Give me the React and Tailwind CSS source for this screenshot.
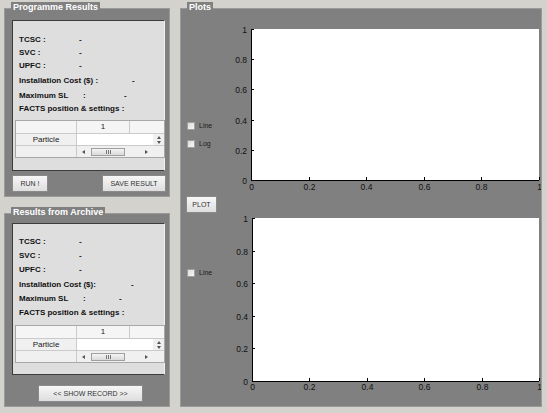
import React from "react";

const FONT = "font-['Liberation_Sans',Arial,sans-serif]";

function Panel({ title, className, children }) {
  return (
    <div className={"relative bg-[#808080] border border-[#9a9a9a] " + className}>
      <div className="absolute left-[6px] top-[-7px] bg-[#808080] px-[2px] text-[9px] leading-[10px] font-bold text-white">
        {title}
      </div>
      {children}
    </div>
  );
}

function Btn({ children, className }) {
  return (
    <button
      className={
        "h-[17px] border border-[#8a8a8a] bg-linear-to-b from-[#f7f7f7] to-[#dedede] text-[7px] leading-none text-[#333] " +
        className
      }
    >
      {children}
    </button>
  );
}

function Checkbox({ label, className }) {
  return (
    <div className={"flex items-center h-[8px] gap-[4px] " + className}>
      <span className="w-[8px] h-[8px] border border-[#a0a0a0] bg-linear-to-br from-[#dcdcdc] to-[#f8f8f8]" />
      <span className="text-[7px] leading-[8px] text-[#1c1c1c]">{label}</span>
    </div>
  );
}

/* ---------- table ---------- */
function Arrow({ dir }) {
  const pts = {
    left: "3,0 3,4 0,2",
    right: "0,0 0,4 3,2",
    up: "0,3 4,3 2,0",
    down: "0,0 4,0 2,3",
  }[dir];
  const w = dir === "left" || dir === "right" ? 3 : 4;
  const h = dir === "left" || dir === "right" ? 4 : 3;
  return (
    <svg width={w} height={h} className="block">
      <polygon points={pts} fill="#555" />
    </svg>
  );
}

function FactsTable() {
  return (
    <div className="ml-[2px] w-[150px] border border-[#a8a8a8] bg-[#f0f0f0] text-[8px] text-[#222]">
      <div className="flex h-[13px] border-b border-[#cacaca] bg-[#f5f5f5]">
        <div className="w-[61px] border-r border-[#cacaca]" />
        <div className="w-[53px] border-r border-[#cacaca] flex items-center justify-center">1</div>
        <div className="flex-1" />
      </div>
      <div className="flex h-[12px] border-b border-[#cacaca]">
        <div className="w-[61px] border-r border-[#cacaca] flex items-center justify-center">Particle</div>
        <div className="w-[76px] bg-white" />
        <div className="flex-1 flex flex-col items-center justify-center gap-[2px]">
          <Arrow dir="up" />
          <Arrow dir="down" />
        </div>
      </div>
      <div className="flex h-[11px]">
        <div className="w-[61px] border-r border-[#cacaca]" />
        <div className="w-[76px] flex items-center pl-[5px]">
          <Arrow dir="left" />
          <div className="ml-[6px] w-[34px] h-[8px] border border-[#a0a0a0] bg-linear-to-b from-[#f4f4f4] to-[#dadada] flex items-center justify-center gap-[1px]">
            <span className="w-px h-[4px] bg-[#777]" />
            <span className="w-px h-[4px] bg-[#777]" />
            <span className="w-px h-[4px] bg-[#777]" />
          </div>
          <div className="ml-[20px]">
            <Arrow dir="right" />
          </div>
        </div>
      </div>
    </div>
  );
}

function Row({ h, className = "", children }) {
  return (
    <div className={"flex items-center pl-[6px] text-[8px] font-bold text-[#111] " + h + " " + className}>
      {children}
    </div>
  );
}

function ResultsBox({ top }) {
  const h = top ? "h-[13px]" : "h-[14px]";
  return (
    <div
      className={
        "ml-[7px] w-[153px] bg-[#dedede] border border-[#3c3c3c] border-r-[#f0f0f0] " +
        (top ? "mt-[11px] h-[151px] pt-[12px]" : "mt-[9px] h-[152px] pt-[11px]")
      }
    >
      <Row h={h}>
        <span className="w-[60px]">TCSC :</span>
        <span>-</span>
      </Row>
      <Row h={h}>
        <span className="w-[60px]">SVC :</span>
        <span>-</span>
      </Row>
      <Row h={h}>
        <span className="w-[60px]">UPFC :</span>
        <span>-</span>
      </Row>
      <Row h={h} className={top ? "mt-[2px]" : "mt-[1px]"}>
        <span className={top ? "w-[113px]" : "w-[112px]"}>{top ? "Installation Cost ($) :" : "Installation Cost ($):"}</span>
        <span>-</span>
      </Row>
      <Row h={h} className={top ? "mt-[2px]" : ""}>
        <span className="w-[64px]">Maximum SL</span>
        <span className={top ? "w-[41px]" : "w-[36px]"}>:</span>
        <span>-</span>
      </Row>
      <Row h={h}>FACTS position &amp; settings :</Row>
      <div className="mt-[5px]">
        <FactsTable />
      </div>
    </div>
  );
}

/* ---------- axes ---------- */
const TICKS = ["0", "0.2", "0.4", "0.6", "0.8", "1"];

function Axes({ height, x0, y0, y1, labelY }) {
  const x1 = 304;
  return (
    <svg width="306" height={height} className="block">
      <rect x={x0} y={y0} width={x1 - x0} height={y1 - y0} fill="white" />
      <line x1={x0 + 0.5} y1={y0} x2={x0 + 0.5} y2={y1 + 0.5} stroke="#000" />
      <line x1={x0} y1={y1 + 0.5} x2={x1} y2={y1 + 0.5} stroke="#000" />
      {TICKS.map((t, i) => {
        const x = Math.round(x0 + (i / 5) * (x1 - x0)) + 0.5;
        const y = Math.round(y1 - (i / 5) * (y1 - y0)) + 0.5;
        return (
          <g key={t}>
            <line x1={x} y1={y1} x2={x} y2={y1 - 3} stroke="#000" />
            <line x1={x0} y1={y} x2={x0 + 3} y2={y} stroke="#000" />
            <text x={x} y={labelY} textAnchor="middle" fontSize="8.5" fill="#111">
              {t}
            </text>
            <text x={x0 - 4} y={y + 3} textAnchor="end" fontSize="8.5" fill="#111">
              {t}
            </text>
          </g>
        );
      })}
    </svg>
  );
}

export default function App() {
  return (
    <div className={"w-[547px] h-[413px] bg-[#d4d2cc] flex pt-[8px] pl-[4px] " + FONT}>
      {/* left column */}
      <div className="w-[166px] flex flex-col">
        <Panel title="Programme Results" className="h-[189px]">
          <ResultsBox top />
          <div className="flex justify-between pl-[7px] pr-[3px] mt-[4px]">
            <Btn className="w-[36px]">RUN !</Btn>
            <Btn className="w-[64px]">SAVE RESULT</Btn>
          </div>
        </Panel>

        <Panel title="Results from Archive" className="mt-[16px] h-[194px]">
          <ResultsBox />
          <div className="pl-[33px] mt-[4px]">
            <Btn className="w-[105px]">&lt;&lt; SHOW RECORD &gt;&gt;</Btn>
          </div>
        </Panel>
      </div>

      {/* plots */}
      <Panel title="Plots" className="ml-[10px] w-[362px] h-[399px] flex">
        <div className="w-[54px] flex flex-col pt-[113px] pl-[6px]">
          <Checkbox label="Line" />
          <Checkbox label="Log" className="mt-[10px]" />
          <Btn className="w-[31px] mt-[48px] -ml-[1px]">PLOT</Btn>
          <Checkbox label="Line" className="mt-[56px]" />
        </div>
        <div className="flex flex-col pt-[11px]">
          <Axes height={180} x0={16} y0={9} y1={160} labelY={170} />
          <Axes height={196} x0={17} y0={18} y1={181} labelY={190} />
        </div>
      </Panel>
    </div>
  );
}
